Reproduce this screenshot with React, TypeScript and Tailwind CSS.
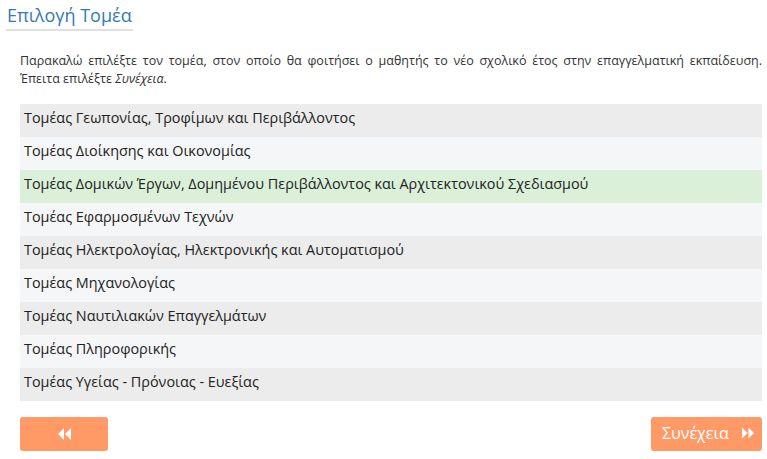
import React from "react";

const rows = [
  "Τομέας Γεωπονίας, Τροφίμων και Περιβάλλοντος",
  "Τομέας Διοίκησης και Οικονομίας",
  "Τομέας Δομικών Έργων, Δομημένου Περιβάλλοντος και Αρχιτεκτονικού Σχεδιασμού",
  "Τομέας Εφαρμοσμένων Τεχνών",
  "Τομέας Ηλεκτρολογίας, Ηλεκτρονικής και Αυτοματισμού",
  "Τομέας Μηχανολογίας",
  "Τομέας Ναυτιλιακών Επαγγελμάτων",
  "Τομέας Πληροφορικής",
  "Τομέας Υγείας - Πρόνοιας - Ευεξίας",
];

function Back() {
  return (
    <svg width="13" height="12" viewBox="0 0 13 12">
      <polygon points="6,0 6,12 0,6" fill="white" />
      <polygon points="13,0 13,12 7,6" fill="white" />
    </svg>
  );
}
function Fwd() {
  return (
    <svg width="12" height="12" viewBox="0 0 13 12">
      <polygon points="0,0 0,12 6,6" fill="white" />
      <polygon points="7,0 7,12 13,6" fill="white" />
    </svg>
  );
}

export default function App() {
  return (
    <div className="w-[767px] h-[459px] bg-white text-[#333]" style={{ fontFamily: '"Open Sans", sans-serif' }}>
      <div className="pl-[6px] pt-[1px]">
        <div className="inline-block border-b-2 border-[#e0e0e0] pr-[1px] pl-[1px] text-[18px] leading-[28px] text-[#337ab7]">
          Επιλογή Τομέα
        </div>
      </div>
      <div className="pl-[20px] pr-[5px] pt-[21px]">
        <p className="text-[12.5px] leading-[18px] text-justify text-[#333]">
          Παρακαλώ επιλέξτε τον τομέα, στον οποίο θα φοιτήσει ο μαθητής το νέο σχολικό έτος στην επαγγελματική εκπαίδευση.
          Έπειτα επιλέξτε <i>Συνέχεια</i>.
        </p>
        <div className="mt-[16px] flex flex-col">
          {rows.map((r, i) => (
            <div
              key={r}
              className={
                "h-[33px] flex items-center pl-[4px] pb-[6px] text-[14.4px] text-[#222] " +
                (i === 2 ? "bg-[#dbf0d9]" : i % 2 === 0 ? "bg-[#ececec]" : "bg-[#f5f6f8]")
              }
            >
              {r}
            </div>
          ))}
        </div>
        <div className="mt-[16px] flex justify-between">
          <button className="w-[88px] h-[34px] rounded-[3px] bg-[#ff9966] flex items-center justify-center">
            <Back />
          </button>
          <button className="w-[111px] h-[34px] rounded-[3px] bg-[#ff9966] flex items-center justify-start pl-[11px] gap-[13px] text-white text-[16px] pb-[2px]">
            <span>Συνέχεια</span>
            <Fwd />
          </button>
        </div>
      </div>
    </div>
  );
}
